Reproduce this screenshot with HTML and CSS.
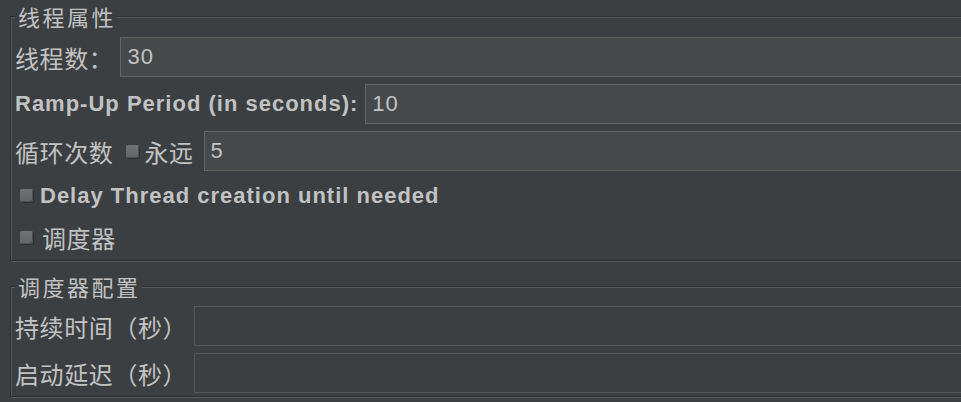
FILE: index.html
```html
<!DOCTYPE html>
<html lang="zh">
<head>
<meta charset="utf-8">
<title>线程组</title>
<link rel="stylesheet" href="styles.css">
</head>
<body>
<div class="panel">
  <fieldset class="group group-threads">
    <legend class="cjk">线程属性</legend>
    <div class="rows">
      <div class="row field-row">
        <span class="label cjk">线程数：</span>
        <div class="input">30</div>
      </div>
      <div class="row field-row">
        <span class="label bold">Ramp-Up Period (in seconds):</span>
        <div class="input">10</div>
      </div>
      <div class="row field-row">
        <span class="label cjk">循环次数</span>
        <span class="check inline-check"><span class="box"></span><span class="cjk">永远</span></span>
        <div class="input">5</div>
      </div>
      <div class="row check-row">
        <span class="check"><span class="box"></span><span class="bold">Delay Thread creation until needed</span></span>
      </div>
      <div class="row check-row">
        <span class="check"><span class="box"></span><span class="cjk">调度器</span></span>
      </div>
    </div>
  </fieldset>

  <fieldset class="group group-sched">
    <legend class="cjk">调度器配置</legend>
    <div class="rows">
      <div class="row field-row">
        <span class="label cjk">持续时间（秒）</span>
        <div class="input disabled"></div>
      </div>
      <div class="row field-row">
        <span class="label cjk">启动延迟（秒）</span>
        <div class="input disabled"></div>
      </div>
    </div>
  </fieldset>
</div>
</body>
</html>
```

FILE: styles.css
```css
html, body {
  margin: 0;
  padding: 0;
  background: #3c3f41;
  overflow: hidden;
}

body {
  width: 961px;
  height: 402px;
  color: #bbbbbb;
  font-family: "Liberation Sans", "Noto Sans CJK SC", sans-serif;
}

.cjk {
  font-family: "Noto Sans CJK SC", "Liberation Sans", sans-serif;
  font-size: 24px;
  letter-spacing: 0.6px;
  color: #c2c2c2;
}

.bold {
  font-family: "Liberation Sans", "Noto Sans CJK SC", sans-serif;
  font-weight: bold;
  font-size: 22px;
  letter-spacing: 1px;
  color: #c2c2c2;
}

.group {
  margin: 0 -40px 0 10px;
  padding: 5px 0 5px 4px;
  border: 1px solid #2d2f31;
  box-shadow: inset 1px 1px 0 #56595b, 1px 1px 0 #56595b;
  min-width: 0;
}

.group legend {
  padding: 0 1px 0 3px;
  font-size: 22px;
  letter-spacing: 2.5px;
  line-height: 32px;
  background: #3c3f41;
}

.group-sched {
  margin-top: 9px;
  padding-top: 4px;
  padding-bottom: 3px;
}

.rows {
  display: flex;
  flex-direction: column;
  gap: 7px;
}

.row {
  display: flex;
  align-items: center;
}

.field-row {
  height: 40px;
}

.check-row {
  height: 35px;
  padding-left: 5px;
}

.label {
  white-space: nowrap;
  margin-right: 7px;
}

.input {
  flex: 1;
  box-sizing: border-box;
  height: 40px;
  padding: 0 6px;
  background: #45494a;
  border: 1px solid #646464;
  display: flex;
  align-items: center;
  font-size: 22px;
  letter-spacing: 1px;
  color: #c2c2c2;
}

.input.disabled {
  background: #3c3f41;
  border-color: #545759;
}

.check {
  display: inline-flex;
  align-items: center;
  gap: 7px;
  white-space: nowrap;
}

.check-row .check .cjk {
  margin-left: 2px;
}

.inline-check {
  margin-left: 6px;
  margin-right: 10px;
  gap: 5px;
}

.box {
  display: inline-block;
  width: 13px;
  height: 13px;
  box-sizing: border-box;
  border-radius: 2px;
  background: linear-gradient(#707375, #626567);
  box-shadow: inset -1px -1px 0 #4a4d4f, 1px 1px 0 #2e3032;
}
```
